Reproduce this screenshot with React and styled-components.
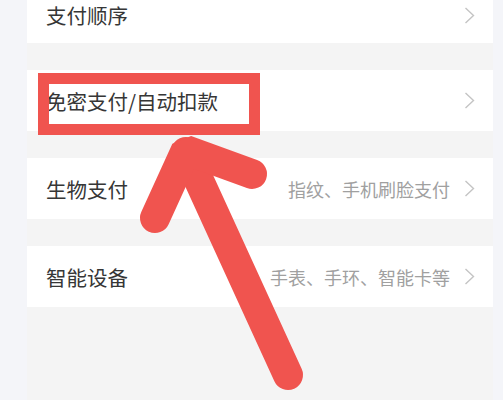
import React from "react";
import styled, { createGlobalStyle } from "styled-components";

const Global = createGlobalStyle`
  html, body { margin: 0; padding: 0; }
  body {
    width: 503px;
    height: 400px;
    overflow: hidden;
    background: #f4f5f9;
    font-family: "Noto Sans CJK SC", "Noto Sans", sans-serif;
  }
`;

const Page = styled.div`
  position: relative;
  width: 503px;
  height: 400px;
  display: flex;
  overflow: hidden;
  background: #f4f5f9;
`;

const Side = styled.div`
  flex: 0 0 ${(p) => p.$w}px;
  background: #f4f5f9;
`;

const Panel = styled.div`
  flex: 1;
  display: flex;
  flex-direction: column;
  gap: 27px;
  background: #f4f4f4;
`;

const Row = styled.div`
  height: ${(p) => (p.$cut ? 43 : 61)}px;
  box-sizing: border-box;
  padding: 0 18px ${(p) => (p.$cut ? 13 : 0)}px 19px;
  background: #ffffff;
  display: flex;
  align-items: center;
`;

const Title = styled.span`
  flex: 1;
  font-size: 20.5px;
  color: #363636;
  line-height: 24px;
  white-space: nowrap;
`;

const Hint = styled.span`
  font-size: 18px;
  color: #a0a0a0;
  line-height: 24px;
  margin-right: 14px;
  white-space: nowrap;
`;

const ChevronSvg = styled.svg`
  flex: 0 0 auto;
  display: block;
`;

const Chevron = () => (
  <ChevronSvg width="11" height="17" viewBox="0 0 11 17">
    <polyline
      points="1.5,1 9.5,8.5 1.5,16"
      fill="none"
      stroke="#c4c4c4"
      strokeWidth="1.4"
      strokeLinejoin="miter"
    />
  </ChevronSvg>
);

const Overlay = styled.svg`
  position: absolute;
  left: 0;
  top: 0;
  pointer-events: none;
`;

const RED = "#f0544f";

const items = [
  { title: "支付顺序", cut: true },
  { title: "免密支付/自动扣款" },
  { title: "生物支付", hint: "指纹、手机刷脸支付" },
  { title: "智能设备", hint: "手表、手环、智能卡等" },
];

export default function App() {
  return (
    <>
      <Global />
      <Page>
        <Side $w={27} />
        <Panel>
          {items.map((it) => (
            <Row key={it.title} $cut={it.cut}>
              <Title>{it.title}</Title>
              {it.hint && <Hint>{it.hint}</Hint>}
              <Chevron />
            </Row>
          ))}
        </Panel>
        <Side $w={10} />
        <Overlay width="503" height="400" viewBox="0 0 503 400">
          <rect
            x="43.5"
            y="78.5"
            width="211"
            height="51"
            fill="none"
            stroke={RED}
            strokeWidth="11"
          />
          <line
            x1="186"
            y1="152"
            x2="288"
            y2="375"
            stroke={RED}
            strokeWidth="30"
            strokeLinecap="round"
          />
          <polyline
            points="155,218 186,150 252,174"
            fill="none"
            stroke={RED}
            strokeWidth="30"
            strokeLinecap="round"
            strokeLinejoin="bevel"
          />
        </Overlay>
      </Page>
    </>
  );
}
